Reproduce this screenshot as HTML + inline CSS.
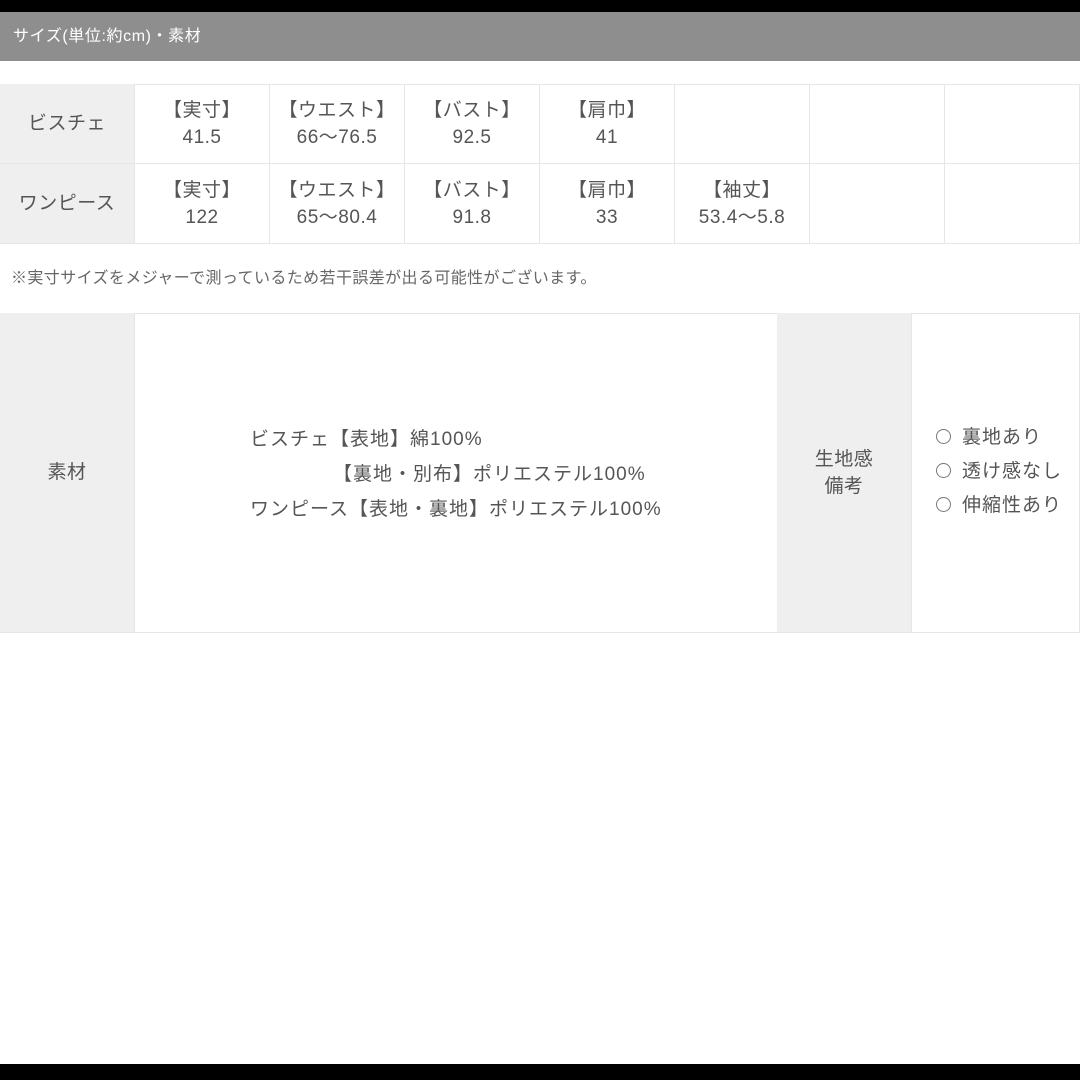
<!DOCTYPE html>
<html><head><meta charset="utf-8"><style>
*{margin:0;padding:0;box-sizing:border-box}
body{width:1080px;height:1080px;background:#fff;position:relative;overflow:hidden;font-family:"Liberation Sans","Noto Sans CJK JP",sans-serif;color:#555}
.a{position:absolute}
.c{position:absolute;display:flex;align-items:center;justify-content:center;text-align:center;font-size:19px;line-height:27px;letter-spacing:0.5px;border-right:1px solid #e6e6e6;border-bottom:1px solid #e6e6e6}
.g{background:#efefef}
.r{display:inline-block;width:15px;height:15px;border:1px solid #777;border-radius:50%;margin-right:11px;vertical-align:-1px}
</style></head><body>
<div class="a" style="left:0;top:0;width:1080px;height:12px;background:#000"></div>
<div class="a" style="left:0;top:12px;width:1080px;height:49px;background:#8e8e8e;color:#fff;font-size:16px;letter-spacing:0.6px;line-height:49px;padding-left:13px">サイズ(単位:約cm)・素材</div>

<div class="a" style="left:0;top:84px;width:1080px;height:1px;background:#e6e6e6"></div>
<div class="c g" style="left:0;top:84px;width:135px;height:80px">ビスチェ</div>
<div class="c" style="left:135px;top:84px;width:135px;height:80px">【実寸】<br>41.5</div>
<div class="c" style="left:270px;top:84px;width:135px;height:80px">【ウエスト】<br>66〜76.5</div>
<div class="c" style="left:405px;top:84px;width:135px;height:80px">【バスト】<br>92.5</div>
<div class="c" style="left:540px;top:84px;width:135px;height:80px">【肩巾】<br>41</div>
<div class="c" style="left:675px;top:84px;width:135px;height:80px"></div>
<div class="c" style="left:810px;top:84px;width:135px;height:80px"></div>
<div class="c" style="left:945px;top:84px;width:135px;height:80px"></div>

<div class="c g" style="left:0;top:164px;width:135px;height:80px">ワンピース</div>
<div class="c" style="left:135px;top:164px;width:135px;height:80px">【実寸】<br>122</div>
<div class="c" style="left:270px;top:164px;width:135px;height:80px">【ウエスト】<br>65〜80.4</div>
<div class="c" style="left:405px;top:164px;width:135px;height:80px">【バスト】<br>91.8</div>
<div class="c" style="left:540px;top:164px;width:135px;height:80px">【肩巾】<br>33</div>
<div class="c" style="left:675px;top:164px;width:135px;height:80px">【袖丈】<br>53.4〜5.8</div>
<div class="c" style="left:810px;top:164px;width:135px;height:80px"></div>
<div class="c" style="left:945px;top:164px;width:135px;height:80px"></div>

<div class="a" style="left:11px;top:268px;font-size:16px;letter-spacing:0.4px;line-height:22px;color:#666;white-space:nowrap">※実寸サイズをメジャーで測っているため若干誤差が出る可能性がございます。</div>

<div class="a" style="left:0;top:313px;width:1080px;height:1px;background:#e3e3e3"></div>
<div class="c g" style="left:0;top:313px;width:135px;height:320px">素材</div>
<div class="c" style="left:135px;top:313px;width:642px;height:320px;border-right:none"></div>
<div class="a" style="left:250px;top:422px;font-size:19px;letter-spacing:1px;line-height:35px;white-space:nowrap">ビスチェ【表地】綿100%<br><span style="padding-left:83px">【裏地・別布】ポリエステル100%</span><br>ワンピース【表地・裏地】ポリエステル100%</div>
<div class="c g" style="left:777px;top:313px;width:135px;height:320px">生地感<br>備考</div>
<div class="c" style="left:912px;top:313px;width:168px;height:320px"></div>
<div class="a" style="left:936px;top:421px;font-size:19px;letter-spacing:1px;line-height:34px;white-space:nowrap"><span class="r"></span>裏地あり<br><span class="r"></span>透け感なし<br><span class="r"></span>伸縮性あり</div>

<div class="a" style="left:0;top:1064px;width:1080px;height:16px;background:#000"></div>
</body></html>
